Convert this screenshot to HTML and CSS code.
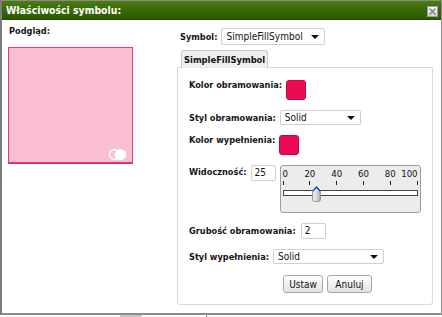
FILE: index.html
```html
<!DOCTYPE html>
<html lang="pl">
<head>
<meta charset="utf-8">
<title>Właściwości symbolu</title>
<link rel="stylesheet" href="styles.css">
</head>
<body>
<div class="dialog">
  <div class="titlebar">
    <span class="title">Właściwości symbolu:</span>
    <span class="close">
      <svg width="9" height="9" viewBox="0 0 9 9"><path d="M1.5 1.5 L7.5 7.5 M7.5 1.5 L1.5 7.5" stroke="#7a7a7a" stroke-width="1.4" fill="none"/></svg>
    </span>
  </div>
  <div class="content">
    <div class="left">
      <div class="label">Podgląd:</div>
      <div class="preview">
        <span class="toggle">
          <svg width="20" height="13" viewBox="0 0 20 13"><circle cx="6.5" cy="6.5" r="5" fill="#f3c6d6" stroke="#fff" stroke-width="1.3"/><circle cx="12.5" cy="6.5" r="5.6" fill="#fff"/></svg>
        </span>
      </div>
    </div>
    <div class="right">
      <div class="symrow">
        <span class="label">Symbol:</span>
        <span class="select sym"><span>SimpleFillSymbol</span><i class="arrow"></i></span>
      </div>
      <div class="tab">SimpleFillSymbol</div>
      <div class="panel">
        <div class="row top">
          <span class="label">Kolor obramowania:</span>
          <span class="swatch"></span>
        </div>
        <div class="row">
          <span class="label">Styl obramowania:</span>
          <span class="select s1"><span>Solid</span><i class="arrow"></i></span>
        </div>
        <div class="row top">
          <span class="label">Kolor wypełnienia:</span>
          <span class="swatch"></span>
        </div>
        <div class="row vis">
          <span class="label">Widoczność:</span>
          <span class="input w25">25</span>
          <div class="slider">
            <div class="scale">
              <div class="mark first"><span>0</span><i></i></div>
              <div class="mark"><span>20</span><i></i></div>
              <div class="mark"><span>40</span><i></i></div>
              <div class="mark"><span>60</span><i></i></div>
              <div class="mark"><span>80</span><i></i></div>
              <div class="mark last"><span>100</span><i></i></div>
            </div>
            <div class="track">
              <span class="thumb" style="left: 25%">
                <svg width="9" height="16" viewBox="0 0 9 16"><defs><linearGradient id="tg" x1="0" x2="1" y1="0" y2="0"><stop offset="0" stop-color="#f4f4f4"/><stop offset="0.5" stop-color="#dcdcdc"/><stop offset="1" stop-color="#a8a8a8"/></linearGradient></defs><path d="M4.5 0.8 L8.4 5 L8.4 13.5 Q8.4 15.4 6.5 15.4 L2.5 15.4 Q0.6 15.4 0.6 13.5 L0.6 5 Z" fill="url(#tg)" stroke="#8a8a8a" stroke-width="0.9"/><path d="M0.9 5.2 L4.5 1 L8.1 5.2" fill="none" stroke="#1a3fd0" stroke-width="1.3"/></svg>
              </span>
            </div>
          </div>
        </div>
        <div class="row">
          <span class="label">Grubość obramowania:</span>
          <span class="input w2">2</span>
        </div>
        <div class="row">
          <span class="label">Styl wypełnienia:</span>
          <span class="select s2"><span>Solid</span><i class="arrow"></i></span>
        </div>
        <div class="buttons">
          <button class="btn b1">Ustaw</button>
          <button class="btn b2">Anuluj</button>
        </div>
      </div>
    </div>
  </div>
</div>
<div class="backdrop"><span class="blk"></span><span class="vline"></span></div>
</body>
</html>
```
FILE: styles.css
```css
html, body {
  margin: 0;
  padding: 0;
}
body {
  width: 442px;
  height: 317px;
  overflow: hidden;
  background: #fff;
  font-family: "DejaVu Sans Condensed", "DejaVu Sans", sans-serif;
  font-stretch: condensed;
  color: #111;
}
.dialog {
  box-sizing: border-box;
  width: 442px;
  height: 315px;
  border-left: 2px solid #7d7d7d;
  border-right: 1px solid #8a8a8a;
  border-top: 1px solid #8a8a8a;
  border-bottom: 2px solid #8c8c8c;
  display: flex;
  flex-direction: column;
}
.titlebar {
  height: 18px;
  background: linear-gradient(#4b7c17 0%, #3a6a08 45%, #2d5a00 100%);
  border-bottom: 1px solid #244a00;
  display: flex;
  align-items: center;
  justify-content: space-between;
  padding: 0 3px 0 4px;
}
.title {
  color: #fff;
  font-weight: bold;
  font-size: 10.4px;
}
.close {
  box-sizing: border-box;
  width: 11px;
  height: 11px;
  border: 1px solid #9a9a9a;
  background: linear-gradient(#fafafa, #d4d4d4);
  display: flex;
  align-items: center;
  justify-content: center;
  margin-top: 2px;
}
.close svg { display: block; }
.content {
  flex: 1;
  display: flex;
}
.label {
  font-weight: bold;
  font-size: 9.15px;
  white-space: nowrap;
  color: #151515;
}
.left {
  width: 175px;
  padding-left: 6px;
  box-sizing: border-box;
}
.left > .label {
  padding-top: 5px;
  line-height: 12px;
  padding-left: 1px;
}
.preview {
  position: relative;
  margin-top: 10px;
  width: 125px;
  height: 117px;
  box-sizing: border-box;
  background: #f9bdd4;
  border: 1px solid #ea3a74;
  border-bottom: 2px solid #e62e6a;
}
.toggle {
  position: absolute;
  right: 4px;
  bottom: 1px;
  line-height: 0;
}
.right {
  width: 256px;
  padding-top: 8px;
}
.symrow {
  display: flex;
  align-items: center;
  padding-left: 3px;
  gap: 4px;
  height: 17px;
}
.select {
  box-sizing: border-box;
  display: inline-flex;
  align-items: center;
  justify-content: space-between;
  border: 1px solid #cfcfcf;
  border-radius: 2px;
  background: #fff;
  font-size: 10px;
  padding: 0 5px 0 4px;
  height: 15px;
  color: #111;
}
.select.sym { width: 104px; height: 17px; }
.select.s1 { width: 81px; }
.select.s2 { width: 111px; }
.arrow {
  width: 0;
  height: 0;
  border-left: 4px solid transparent;
  border-right: 4px solid transparent;
  border-top: 4px solid #111;
}
.tab {
  display: inline-block;
  box-sizing: border-box;
  margin: 5px 0 -1px 4px;
  height: 18px;
  padding: 0 2px;
  line-height: 17px;
  font-size: 9.3px;
  font-weight: bold;
  background: #eeeeee;
  border: 1px solid #c9c9c9;
  border-bottom: none;
  border-radius: 3px 3px 0 0;
  position: relative;
}
.panel {
  box-sizing: border-box;
  width: 256px;
  height: 238px;
  border: 1px solid #dadada;
  border-radius: 0 0 3px 3px;
  padding: 12px 0 0 11px;
  display: flex;
  flex-direction: column;
  gap: 10px;
}
.row {
  display: flex;
  align-items: center;
  gap: 4px;
}
.row.top { align-items: flex-start; }
.row.top .label { line-height: 10px; }
.row.vis { align-items: flex-start; }
.row.vis .label { line-height: 14px; }
.swatch {
  box-sizing: border-box;
  width: 20px;
  height: 20px;
  border-radius: 3px;
  background: #ea0b52;
  border: 1px solid #c9043f;
}
.input {
  box-sizing: border-box;
  display: inline-block;
  height: 16px;
  border: 1px solid #cfcfcf;
  border-radius: 2px;
  font-size: 10px;
  line-height: 14px;
  padding-left: 3px;
  color: #111;
}
.input.w25 { width: 25px; }
.input.w2 { width: 25px; margin-left: 1px; }
.slider {
  box-sizing: border-box;
  width: 141px;
  height: 48px;
  background: #ececec;
  border: 1px solid #9c9c9c;
  border-radius: 3px;
  padding: 2px 2px 0 2px;
}
.scale {
  display: flex;
  justify-content: space-between;
  height: 19px;
}
.mark {
  width: 1px;
  display: flex;
  flex-direction: column;
  align-items: center;
}
.mark.first { align-items: flex-start; }
.mark.last { align-items: flex-end; }
.mark span {
  font-size: 9.5px;
  line-height: 12px;
  white-space: nowrap;
  color: #111;
}
.mark i {
  display: block;
  width: 1px;
  height: 4px;
  margin-top: 1px;
  background: #222;
}
.track {
  position: relative;
  margin-top: 3px;
  height: 6px;
  box-sizing: border-box;
  background: #fff;
  border: 1px solid #444;
}
.thumb {
  position: absolute;
  top: -5px;
  margin-left: -5px;
  line-height: 0;
}
.buttons {
  display: flex;
  gap: 4px;
  margin-left: 94px;
  margin-top: 1px;
}
.btn {
  box-sizing: border-box;
  height: 18px;
  padding: 0;
  font-family: "DejaVu Sans Condensed", "DejaVu Sans", sans-serif;
  font-stretch: condensed;
  font-size: 10px;
  color: #111;
  background: linear-gradient(#ffffff, #e2e2e2);
  border: 1px solid #a8a8a8;
  border-radius: 3px;
}
.btn.b1 { width: 40px; }
.btn.b2 { width: 45px; }
.backdrop {
  height: 2px;
  position: relative;
  display: flex;
  background: #fff;
}
.blk {
  margin-left: 120px;
  width: 22px;
  background: #c8c8c8;
}
.vline {
  margin-left: 64px;
  width: 1px;
  background: #777;
}
```
